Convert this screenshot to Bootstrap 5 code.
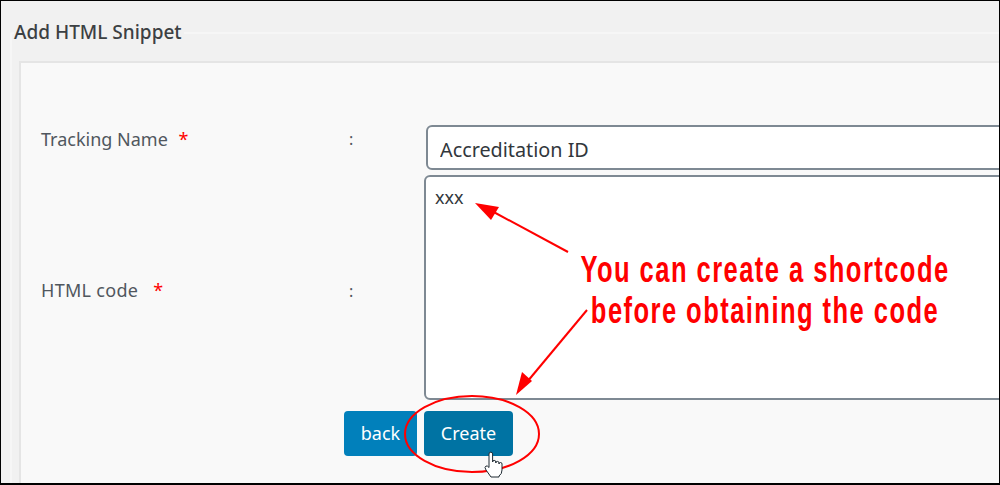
<!DOCTYPE html>
<html lang="en">
<head>
    <meta charset="UTF-8">
    <meta name="viewport" content="width=device-width, initial-scale=1.0">
    <title>Add HTML Snippet</title>
    <link href="https://cdn.jsdelivr.net/npm/bootstrap@5.3.0/dist/css/bootstrap.min.css" rel="stylesheet">
    <style>
        html, body { height: 100%; overflow: hidden; }
        body { background: #f1f1f1; font-family: "Noto Sans", "Open Sans", sans-serif; color: #444; }
        .shot-frame {
            position: relative;
            width: 1000px;
            height: 485px;
            overflow: hidden;
            border-top: 1px solid #000;
            border-left: 1px solid #000;
            border-right: 1px solid #000;
            border-bottom: 2px solid #000;
        }
        .snippet-box {
            width: 1100px;
            height: 600px;
            margin: 22px 0 0 9px;
            padding: 0;
            border: 2px solid #f6f6f6;
            border-radius: 3px;
        }
        .snippet-box legend {
            float: none;
            width: auto;
            margin: 0 0 0 2px;
            padding: 0 2px 0 0;
            font-size: 19px;
            font-weight: 500;
            line-height: 19px;
            color: #3c4043;
        }
        .snippet-panel {
            margin: 19px 0 0 7px;
            padding: 62px 0 0 20px;
            height: 500px;
            background: #f9f9f9;
            border: 2px solid #e5e5e5;
        }
        .field-label { flex: 0 0 308px; font-size: 18px; color: #50575e; }
        .field-colon { flex: 0 0 75px; font-size: 16px; color: #50575e; }
        .req-star { color: #f00; margin-left: 6px; }
        .snippet-input, .snippet-area {
            display: block;
            flex: 0 0 700px;
            background: #fff;
            border: 2px solid #7e8993;
            border-radius: 6px;
            color: #32373c;
            font-family: inherit;
            outline: 0;
        }
        .snippet-input { height: 45px; margin-left: 2px; padding: 4px 12px 0; font-size: 19.8px; }
        .snippet-area { height: 225px; padding: 8px 9px; font-size: 18px; line-height: 24px; resize: none; }
        .row-name { align-items: flex-start; }
        .row-name .field-label { padding-top: 1px; }
        .row-name .field-colon { padding-top: 2px; }
        .row-code { margin-top: 5px; align-items: center; }
        .row-code .field-label { padding-top: 5px; letter-spacing: .3px; }
        .row-code .field-colon { padding-top: 6px; }
        .row-code .req-star { margin-left: 10px; }
        .row-btns { margin: 11px 0 0 303px; gap: 7px; }
        .snippet-btn {
            height: 45px;
            padding: 0;
            border: 0;
            border-radius: 4px;
            color: #fff;
            font-size: 18px;
        }
        .btn-back { width: 73px; background: #0180bb; }
        .btn-create { width: 89px; background: #0073a3; }
        .btn-back:hover { background: #0180bb; color: #fff; }
        .btn-create:hover { background: #0073a3; color: #fff; }
        .callout-marks { position: absolute; left: -1px; top: -1px; pointer-events: none; }
        .callout-text {
            position: absolute;
            left: 464px;
            top: 248px;
            width: 600px;
            color: #f00;
            font-family: "Liberation Sans", sans-serif;
            font-weight: 700;
            font-size: 37px;
            line-height: 41px;
            letter-spacing: 2.1px;
            text-align: center;
            white-space: nowrap;
            transform: scaleX(.69);
            transform-origin: 50% 50%;
        }
    </style>
</head>
<body>
    <div class="shot-frame">
        <fieldset class="snippet-box">
            <legend>Add HTML Snippet</legend>
            <div class="snippet-panel">
                <div class="d-flex row-name">
                    <label class="field-label" for="trackName">Tracking Name <span class="req-star">*</span></label>
                    <div class="field-colon">:</div>
                    <input class="snippet-input" id="trackName" type="text" value="Accreditation ID">
                </div>
                <div class="d-flex row-code">
                    <label class="field-label" for="htmlCode">HTML code <span class="req-star">*</span></label>
                    <div class="field-colon">:</div>
                    <textarea class="snippet-area" id="htmlCode">xxx</textarea>
                </div>
                <div class="d-flex row-btns">
                    <button type="button" class="btn snippet-btn btn-back">back</button>
                    <button type="button" class="btn snippet-btn btn-create">Create</button>
                </div>
            </div>
        </fieldset>

        <!-- annotation layer -->
        <div class="callout-text">You can create a shortcode<br>before obtaining the code</div>
        <svg class="callout-marks" width="1000" height="485" viewBox="0 0 1000 485">
            <line x1="568" y1="252" x2="490" y2="210" stroke="#f00" stroke-width="2"/>
            <polygon points="475,203 499,207 491,220" fill="#f00"/>
            <line x1="587" y1="310" x2="527" y2="382" stroke="#f00" stroke-width="2"/>
            <polygon points="516,395 522,372 532,381" fill="#f00"/>
            <ellipse cx="472" cy="434" rx="67" ry="38" fill="none" stroke="#f00" stroke-width="2"/>
            <!-- hand cursor -->
            <path d="M489 454 a1.800 1.800 0 0 1 3.600 0 v8 a1.600 1.600 0 0 1 3.200 0 v1 a1.600 1.600 0 0 1 3.200 0 v1 a1.500 1.500 0 0 1 3 0 v6 q0 4 -3 6 v1 h-8 l-5 -7 q-2 -3 0 -4 q1.500 -.5 3 1.500 z" fill="#fff" stroke="#1f2a33" stroke-width="1"/>
        </svg>
    </div>
    <script src="https://cdn.jsdelivr.net/npm/bootstrap@5.3.0/dist/js/bootstrap.bundle.min.js"></script>
</body>
</html>
